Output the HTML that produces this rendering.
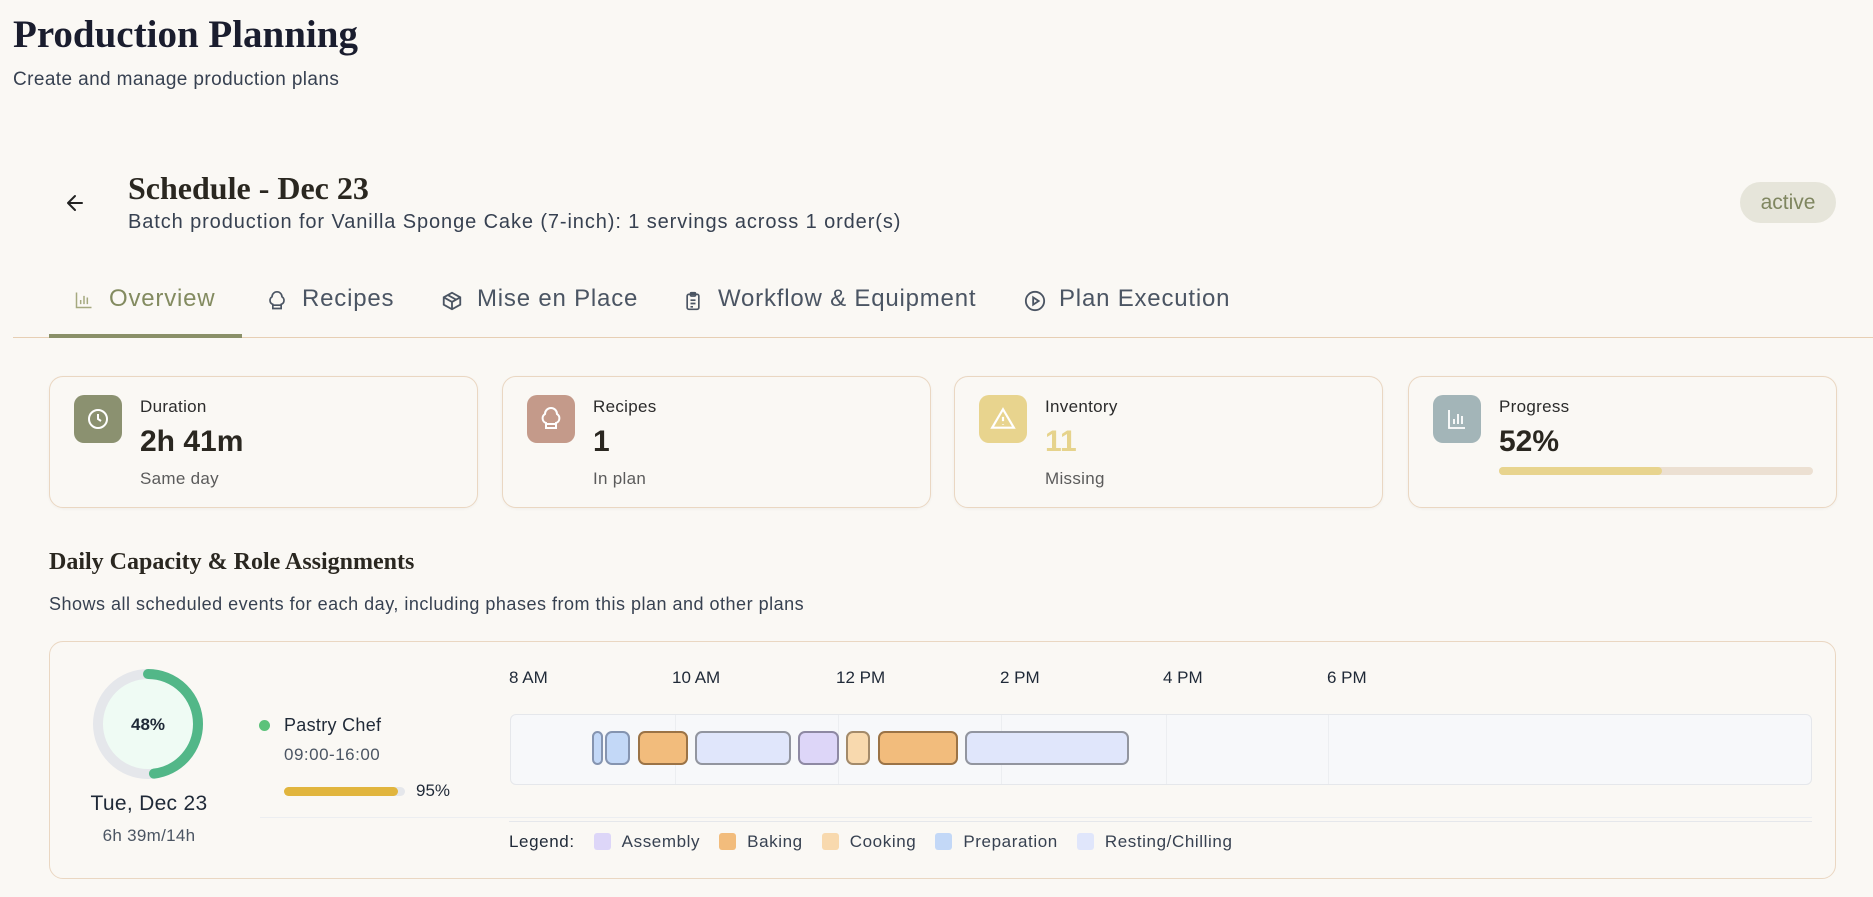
<!DOCTYPE html>
<html><head><meta charset="utf-8"><style>
*{margin:0;padding:0;box-sizing:border-box}
body{width:1873px;height:897px;background:#faf8f4;font-family:"Liberation Sans",sans-serif;color:#1f2937;position:relative;overflow:hidden}
.a{position:absolute;white-space:nowrap}
.serif{font-family:"Liberation Serif",serif;font-weight:bold}
.card{position:absolute;top:376px;height:132px;width:429px;border:1px solid #ead7c2;border-radius:14px;background:#faf8f4;box-shadow:0 1px 3px rgba(0,0,0,.04)}
.ib{position:absolute;left:24px;top:18px;width:48px;height:48px;border-radius:10px;display:flex;align-items:center;justify-content:center}
.lab{position:absolute;left:90px;top:20px;font-size:17px;color:#2b2b2b;letter-spacing:.3px}
.val{position:absolute;left:90px;top:48px;font-size:30px;font-weight:bold;color:#2a2720}
.sub{position:absolute;left:90px;top:92px;font-size:17px;color:#5b5b5b;letter-spacing:.3px}
.tab{position:absolute;top:285px;font-size:24px;color:#4b5563;letter-spacing:.8px}
.ti{position:absolute;top:290px}
.blk{position:absolute;top:731px;height:34px;border-radius:7px;border:2.5px solid}
.lg{display:inline-block;width:17px;height:17px;border-radius:3px;vertical-align:-3px;margin:0 11px 0 19px}
</style></head><body>
<div class="a serif" style="left:13px;top:12px;font-size:39px;color:#1a1d2e">Production Planning</div>
<div class="a" style="left:13px;top:69px;font-size:19px;color:#374151;letter-spacing:.4px">Create and manage production plans</div>

<svg class="a" style="left:63px;top:191px" width="24" height="24" viewBox="0 0 24 24" fill="none" stroke="#222" stroke-width="2" stroke-linecap="round" stroke-linejoin="round"><path d="M19 12H5M12 19l-7-7 7-7"/></svg>
<div class="a serif" style="left:128px;top:170px;font-size:32px;color:#2a2720">Schedule - Dec 23</div>
<div class="a" style="left:128px;top:211px;font-size:20px;color:#374151;letter-spacing:.9px">Batch production for Vanilla Sponge Cake (7-inch): 1 servings across 1 order(s)</div>
<div class="a" style="left:1740px;top:182px;width:96px;height:41px;border-radius:21px;background:#e6e5da;color:#7f8660;font-size:21px;text-align:center;line-height:41px">active</div>

<svg class="a ti" style="left:74px" width="20" height="20" viewBox="0 0 24 24" fill="none" stroke="#a5a97f" stroke-width="1.8"><path d="M3 3v18h18M8 17v-5M12 17V7M16 17v-8"/></svg>
<div class="tab" style="left:109px;color:#838b60">Overview</div>
<svg class="a ti" style="left:267px" width="20" height="22" viewBox="0 0 24 24" fill="none" stroke="#4b5563" stroke-width="2"><path d="M7 21h10v-5a5 5 0 0 0 1-9 5 5 0 0 0-12 0 5 5 0 0 0 1 9z"/><path d="M7 17h10"/></svg>
<div class="tab" style="left:302px">Recipes</div>
<svg class="a ti" style="left:441px" width="22" height="22" viewBox="0 0 24 24" fill="none" stroke="#4b5563" stroke-width="2"><path d="M21 8l-9-5-9 5v8l9 5 9-5z"/><path d="M3 8l9 5 9-5M12 13v8M7.5 5.5l9 5"/></svg>
<div class="tab" style="left:477px">Mise en Place</div>
<svg class="a ti" style="left:683px" width="20" height="22" viewBox="0 0 24 24" fill="none" stroke="#4b5563" stroke-width="2"><rect x="5" y="4" width="14" height="18" rx="2"/><rect x="9" y="2" width="6" height="4" rx="1"/><path d="M9 11h6M9 15h6M9 19h3"/></svg>
<div class="tab" style="left:718px">Workflow &amp; Equipment</div>
<svg class="a ti" style="left:1024px" width="22" height="22" viewBox="0 0 24 24" fill="none" stroke="#4b5563" stroke-width="2"><circle cx="12" cy="12" r="10"/><path d="M10 8l6 4-6 4z"/></svg>
<div class="tab" style="left:1059px">Plan Execution</div>
<div class="a" style="left:13px;top:337px;width:1860px;height:1px;background:#e7cfb4"></div>
<div class="a" style="left:49px;top:334px;width:193px;height:4px;background:#8a9068"></div>

<div class="card" style="left:49px"><div class="ib" style="background:#8b9170"><svg width="24" height="24" viewBox="0 0 24 24" fill="none" stroke="#fff" stroke-width="2"><circle cx="12" cy="12" r="9"/><path d="M12 7v5l3 2"/></svg></div><div class="lab">Duration</div><div class="val">2h 41m</div><div class="sub">Same day</div></div>
<div class="card" style="left:502px"><div class="ib" style="background:#c49a8a"><svg width="24" height="24" viewBox="0 0 24 24" fill="none" stroke="#fff" stroke-width="2"><path d="M7 21h10v-5a5 5 0 0 0 1-9 5 5 0 0 0-12 0 5 5 0 0 0 1 9z"/><path d="M7 17h10"/></svg></div><div class="lab">Recipes</div><div class="val">1</div><div class="sub">In plan</div></div>
<div class="card" style="left:954px"><div class="ib" style="background:#e8d48e"><svg width="26" height="26" viewBox="0 0 24 24" fill="none" stroke="#fff" stroke-width="2"><path d="M12 3L2 20h20z"/><path d="M12 10v4M12 17v.5"/></svg></div><div class="lab">Inventory</div><div class="val" style="color:#e6d38c">11</div><div class="sub">Missing</div></div>
<div class="card" style="left:1408px"><div class="ib" style="background:#a3b5b8"><svg width="24" height="24" viewBox="0 0 24 24" fill="none" stroke="#fff" stroke-width="1.8"><path d="M4 3v18h16M9 17v-5M13 17V7M17 17v-8"/></svg></div><div class="lab">Progress</div><div class="val">52%</div>
<div class="a" style="left:90px;top:90px;width:314px;height:8px;border-radius:4px;background:#ece0d2"><div style="width:52%;height:8px;border-radius:4px;background:#e8d48e"></div></div></div>

<div class="a serif" style="left:49px;top:549px;font-size:24px;color:#2a2720">Daily Capacity &amp; Role Assignments</div>
<div class="a" style="left:49px;top:594px;font-size:18px;color:#374151;letter-spacing:.5px">Shows all scheduled events for each day, including phases from this plan and other plans</div>

<div class="a" style="left:49px;top:641px;width:1787px;height:238px;border:1px solid #ead7c2;border-radius:14px"></div>
<svg class="a" style="left:88px;top:664px" width="120" height="120" viewBox="0 0 120 120"><circle cx="60" cy="60" r="50" fill="#effbf4" stroke="#e5e7eb" stroke-width="10"/><circle cx="60" cy="60" r="50" fill="none" stroke="#52b788" stroke-width="10" stroke-linecap="round" stroke-dasharray="150.8 314.2" transform="rotate(-90 60 60)"/><text x="60" y="66" text-anchor="middle" font-family="Liberation Sans" font-weight="bold" font-size="17" fill="#1f2937">48%</text></svg>
<div class="a" style="left:49px;top:792px;width:200px;text-align:center;font-size:21px;color:#1f2937;letter-spacing:.3px">Tue, Dec 23</div>
<div class="a" style="left:49px;top:826px;width:200px;text-align:center;font-size:17px;color:#4b5563;letter-spacing:.3px">6h 39m/14h</div>
<div class="a" style="left:259px;top:720px;width:11px;height:11px;border-radius:50%;background:#5cc27a"></div>
<div class="a" style="left:284px;top:715px;font-size:18px;color:#1f2937;letter-spacing:.3px">Pastry Chef</div>
<div class="a" style="left:284px;top:745px;font-size:17px;color:#4b5563;letter-spacing:.5px">09:00-16:00</div>
<div class="a" style="left:284px;top:787px;width:121px;height:9px;border-radius:5px;background:#e5e7eb"><div style="width:114px;height:9px;border-radius:5px;background:#e1b53d"></div></div>
<div class="a" style="left:416px;top:781px;font-size:17px;color:#1f2937">95%</div>

<div class="a" style="left:509px;top:668px;font-size:17px;color:#1f2937">8 AM</div>
<div class="a" style="left:672px;top:668px;font-size:17px;color:#1f2937">10 AM</div>
<div class="a" style="left:836px;top:668px;font-size:17px;color:#1f2937">12 PM</div>
<div class="a" style="left:1000px;top:668px;font-size:17px;color:#1f2937">2 PM</div>
<div class="a" style="left:1163px;top:668px;font-size:17px;color:#1f2937">4 PM</div>
<div class="a" style="left:1327px;top:668px;font-size:17px;color:#1f2937">6 PM</div>
<div class="a" style="left:510px;top:714px;width:1302px;height:71px;border:1px solid #e5e7eb;border-radius:6px;background:#f7f8fa"></div>
<div class="a" style="left:675px;top:715px;width:1px;height:69px;background:#eceef1"></div>
<div class="a" style="left:838px;top:715px;width:1px;height:69px;background:#eceef1"></div>
<div class="a" style="left:1001px;top:715px;width:1px;height:69px;background:#eceef1"></div>
<div class="a" style="left:1166px;top:715px;width:1px;height:69px;background:#eceef1"></div>
<div class="a" style="left:1328px;top:715px;width:1px;height:69px;background:#eceef1"></div>
<div class="blk" style="left:592px;width:11px;background:#c3d8f7;border-color:#8594b0"></div>
<div class="blk" style="left:605px;width:25px;background:#c3d8f7;border-color:#8594b0"></div>
<div class="blk" style="left:638px;width:50px;background:#f2bc7c;border-color:#9b7346"></div>
<div class="blk" style="left:695px;width:96px;background:#e0e6fb;border-color:#92959f"></div>
<div class="blk" style="left:798px;width:41px;background:#ddd6f8;border-color:#8e89a3"></div>
<div class="blk" style="left:846px;width:24px;background:#f8d9ae;border-color:#a38a6a"></div>
<div class="blk" style="left:878px;width:80px;background:#f2bc7c;border-color:#9b7346"></div>
<div class="blk" style="left:965px;width:164px;background:#e0e6fb;border-color:#92959f"></div>
<div class="a" style="left:260px;top:817px;width:1552px;height:1px;background:#eceef1"></div>
<div class="a" style="left:509px;top:821px;width:1303px;height:1px;background:#e5e7eb"></div>
<div class="a" style="left:509px;top:832px;font-size:17px;color:#374151;letter-spacing:.6px"><span style="color:#1f2937">Legend:</span><span class="lg" style="background:#ddd6f8"></span>Assembly<span class="lg" style="background:#f2bc7c"></span>Baking<span class="lg" style="background:#f8d9ae"></span>Cooking<span class="lg" style="background:#c3d8f7"></span>Preparation<span class="lg" style="background:#e0e6fb"></span>Resting/Chilling</div>
</body></html>
